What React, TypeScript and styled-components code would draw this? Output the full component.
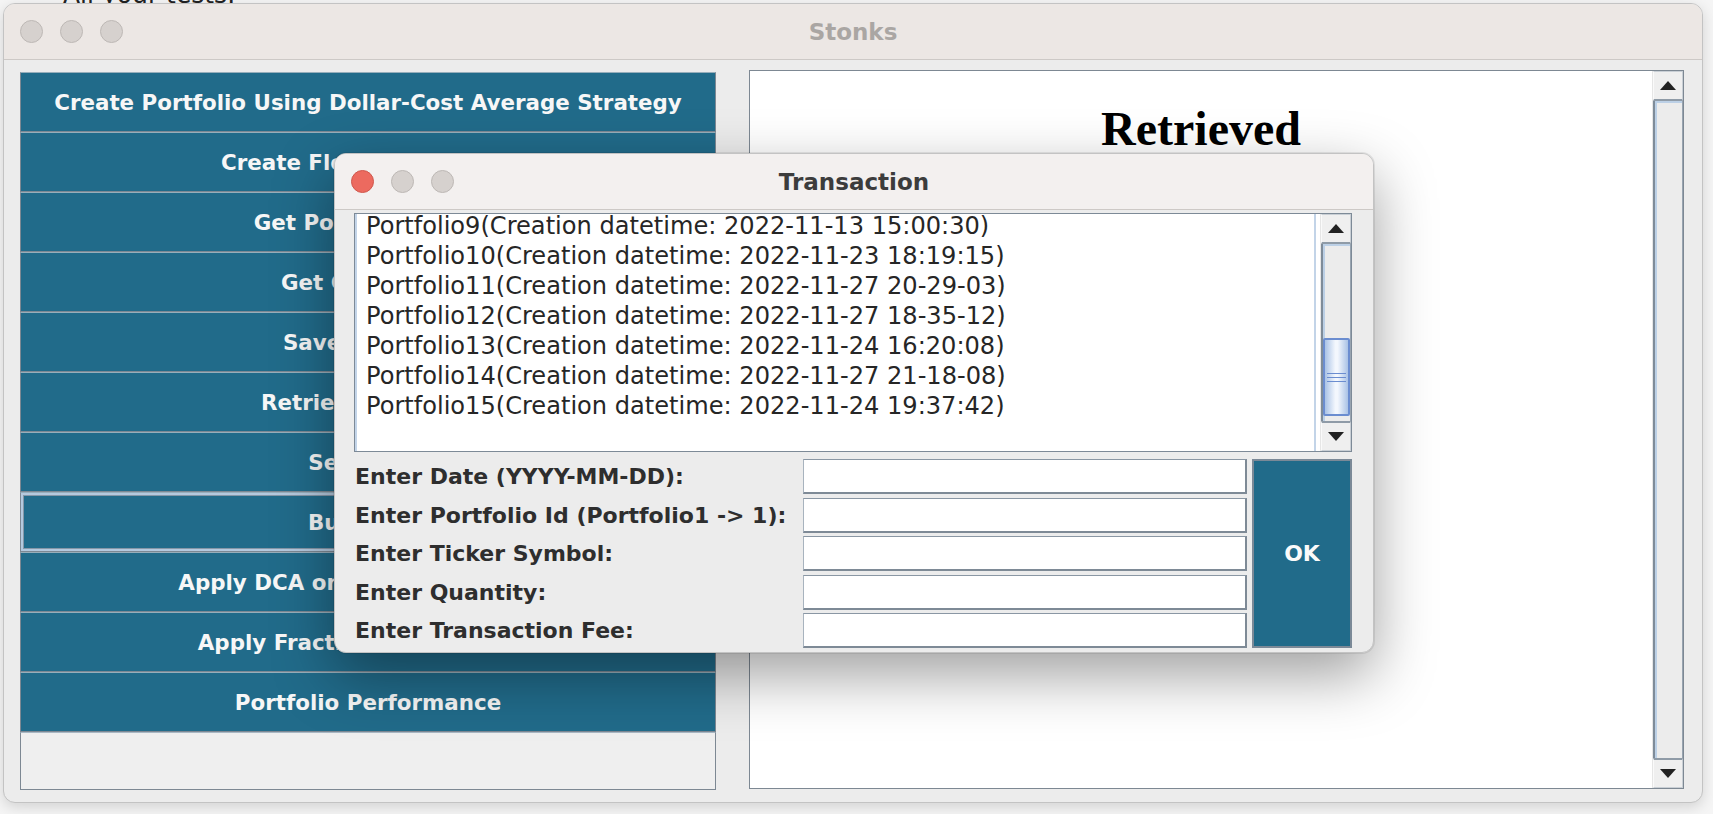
import React from "react";
import styled, { createGlobalStyle } from "styled-components";

const GlobalStyle = createGlobalStyle`
  html, body { margin: 0; padding: 0; }
  body {
    background: #f4f4f4;
    font-family: "DejaVu Sans", "Liberation Sans", sans-serif;
    overflow: hidden;
  }
`;

const Desktop = styled.div`
  position: relative;
  width: 1713px;
  height: 814px;
  overflow: hidden;
  background: #f5f5f5;
`;

const BehindText = styled.div`
  position: absolute;
  left: 63px;
  top: -18px;
  font: 25px/25px "DejaVu Sans", sans-serif;
  color: #222;
  white-space: nowrap;
`;

const Window = styled.div<{ $left: number; $top: number; $w: number; $h: number; $shadow: string }>`
  position: absolute;
  left: ${(p) => p.$left}px;
  top: ${(p) => p.$top}px;
  width: ${(p) => p.$w}px;
  height: ${(p) => p.$h}px;
  box-sizing: border-box;
  border: 1px solid #c3c3c3;
  border-radius: 12px;
  background: #ececec;
  box-shadow: ${(p) => p.$shadow};
  display: flex;
  flex-direction: column;
  overflow: hidden;
`;

const TitleBar = styled.div<{ $bg: string }>`
  height: 56px;
  flex: none;
  box-sizing: border-box;
  background: ${(p) => p.$bg};
  border-bottom: 1px solid #cdc9c6;
  display: grid;
  grid-template-columns: 1fr auto 1fr;
  align-items: center;
  padding: 0 16px;
`;

const Lights = styled.div`
  display: flex;
  gap: 17px;
`;

const Light = styled.span<{ $fill: string; $edge: string }>`
  width: 23px;
  height: 23px;
  box-sizing: border-box;
  border-radius: 50%;
  background: ${(p) => p.$fill};
  border: 1px solid ${(p) => p.$edge};
`;

const Title = styled.div<{ $color: string }>`
  font: bold 23px "DejaVu Sans", sans-serif;
  color: ${(p) => p.$color};
  white-space: nowrap;
`;

const MainBody = styled.div`
  flex: 1;
  display: flex;
  gap: 33px;
  padding: 12px 18px 12px 16px;
  min-height: 0;
`;

const LeftPanel = styled.div`
  width: 696px;
  flex: none;
  display: flex;
  flex-direction: column;
`;

const MenuButton = styled.div<{ $focused?: boolean }>`
  height: 60px;
  flex: none;
  box-sizing: border-box;
  display: flex;
  align-items: center;
  justify-content: center;
  background: #216b8a;
  border: 1px solid #7d8893;
  border-top-color: #97aebb;
  box-shadow: ${(p) =>
    p.$focused ? "inset 0 0 0 2px #b4c9de, inset 0 0 0 3px #8597a8" : "none"};
  color: #f7f7f7;
  font: bold 21.4px "DejaVu Sans", sans-serif;
  white-space: nowrap;
  overflow: hidden;
`;

const EmptyBox = styled.div`
  flex: 1;
  background: #efefef;
  border: 1px solid #7d8893;
  border-top-color: #a9b8c4;
`;

const RightPanel = styled.div`
  flex: 1;
  display: flex;
  background: #fff;
  border: 1px solid #7d8893;
  margin-top: -2px;
  margin-bottom: 1px;
`;

const Document = styled.div`
  flex: 1;
  padding-top: 30px;
`;

const Heading = styled.h1`
  margin: 0;
  text-align: center;
  font: bold 48px "Liberation Serif", "Times New Roman", serif;
  color: #000;
`;

const ScrollColumn = styled.div`
  width: 30px;
  flex: none;
  display: flex;
  flex-direction: column;
  background: #ececec;
  border-left: 1px solid #e6e6e6;
`;

const ScrollButton = styled.div<{ $up?: boolean }>`
  height: 30px;
  flex: none;
  box-sizing: border-box;
  display: flex;
  align-items: center;
  justify-content: center;
  background: #efefef;
  border: 1px solid #c9cfd5;
  border-left-color: #fafafa;
  ${(p) => (p.$up ? "border-bottom: 2px solid #8f9ba7;" : "border-top: 2px solid #8f9ba7;")}
`;

const Track = styled.div`
  flex: 1;
  position: relative;
  background: #ececec;
  border-left: 2px solid #7f8c99;
  border-right: 1px solid #98a4b0;
  box-shadow: inset 2px 0 0 #bcd0e6, inset 0 2px 0 #bcd0e6;
`;

const Thumb = styled.div`
  position: absolute;
  left: 0;
  right: 0;
  box-sizing: border-box;
  border: 2px solid #6b8dd0;
  border-radius: 2px;
  background: linear-gradient(to right, #a9c2e6, #f3f7fd 45%, #f3f7fd 55%, #a9c2e6);
  display: flex;
  align-items: center;
  justify-content: center;
`;

const Grip = styled.div`
  width: 19px;
  height: 9px;
  background: repeating-linear-gradient(
    to bottom,
    #6b8dd0 0px,
    #6b8dd0 1px,
    transparent 1px,
    transparent 4px
  );
`;

const Arrow = ({ up }: { up?: boolean }) => (
  <svg width="16" height="9" viewBox="0 0 16 9">
    <polygon points={up ? "8,0 16,9 0,9" : "0,0 16,0 8,9"} fill="#222" />
  </svg>
);

const Scrollbar = ({ thumb }: { thumb?: { top: number; height: number } }) => (
  <ScrollColumn>
    <ScrollButton $up>
      <Arrow up />
    </ScrollButton>
    <Track>
      {thumb && (
        <Thumb style={{ top: thumb.top, height: thumb.height }}>
          <Grip />
        </Thumb>
      )}
    </Track>
    <ScrollButton>
      <Arrow />
    </ScrollButton>
  </ScrollColumn>
);

const DialogBody = styled.div`
  flex: 1;
  display: flex;
  flex-direction: column;
  gap: 7px;
  padding: 3px 21px 4px 19px;
`;

const ListBox = styled.div`
  height: 239px;
  flex: none;
  box-sizing: border-box;
  display: flex;
  background: #fff;
  border: 1px solid #7d8a97;
`;

const ListContent = styled.div`
  flex: 1;
  overflow: hidden;
  border-left: 2px solid #c3d4e8;
  border-right: 2px solid #c3d4e8;
  margin-right: 4px;
  padding-left: 9px;
`;

const ListInner = styled.div`
  margin-top: -3px;
`;

const ListItem = styled.div`
  font: 24.1px/30px "DejaVu Sans", sans-serif;
  color: #262626;
  white-space: nowrap;
`;

const Form = styled.div`
  display: grid;
  grid-template-columns: 444px 444px 100px;
  grid-template-rows: repeat(5, 35px);
  column-gap: 5px;
  row-gap: 3.5px;
`;

const Label = styled.div<{ $row: number }>`
  grid-column: 1;
  grid-row: ${(p) => p.$row};
  align-self: center;
  padding-left: 1px;
  font: bold 22px "DejaVu Sans", sans-serif;
  color: #2e2e2e;
  white-space: nowrap;
`;

const Field = styled.div<{ $row: number }>`
  grid-column: 2;
  grid-row: ${(p) => p.$row};
  box-sizing: border-box;
  background: #fff;
  border-top: 1px solid #8a97a4;
  border-left: 1px solid #a8b3be;
  border-right: 2px solid #7e8a96;
  border-bottom: 2px solid #7e8a96;
`;

const OkButton = styled.div`
  grid-column: 3;
  grid-row: 1 / span 5;
  box-sizing: border-box;
  display: flex;
  align-items: center;
  justify-content: center;
  background: #216b8a;
  border: 2px solid #7b8997;
  color: #fafafa;
  font: bold 22px "DejaVu Sans", sans-serif;
`;

const menu = [
  "Create Portfolio Using Dollar-Cost Average Strategy",
  "Create Flexible Portfolio",
  "Get Portfolio Value",
  "Get Cost Basis",
  "Save Portfolio",
  "Retrieve Portfolio",
  "Sell Stock",
  "Buy Stock",
  "Apply DCA on Existing Portfolio",
  "Apply Fractional Investment",
  "Portfolio Performance",
];

const portfolios = [
  "Portfolio9(Creation datetime: 2022-11-13 15:00:30)",
  "Portfolio10(Creation datetime: 2022-11-23 18:19:15)",
  "Portfolio11(Creation datetime: 2022-11-27 20-29-03)",
  "Portfolio12(Creation datetime: 2022-11-27 18-35-12)",
  "Portfolio13(Creation datetime: 2022-11-24 16:20:08)",
  "Portfolio14(Creation datetime: 2022-11-27 21-18-08)",
  "Portfolio15(Creation datetime: 2022-11-24 19:37:42)",
];

const labels = [
  "Enter Date (YYYY-MM-DD):",
  "Enter Portfolio Id (Portfolio1 -> 1):",
  "Enter Ticker Symbol:",
  "Enter Quantity:",
  "Enter Transaction Fee:",
];

export default function App() {
  return (
    <>
      <GlobalStyle />
      <Desktop>
        <BehindText>All your tests.</BehindText>
        <Window $left={3} $top={3} $w={1700} $h={800} $shadow="0 4px 14px rgba(0,0,0,0.14)">
          <TitleBar $bg="#ece7e4">
            <Lights>
              <Light $fill="#d6d1ce" $edge="#bdb8b5" />
              <Light $fill="#d6d1ce" $edge="#bdb8b5" />
              <Light $fill="#d6d1ce" $edge="#bdb8b5" />
            </Lights>
            <Title $color="#aaa6a3">Stonks</Title>
            <span />
          </TitleBar>
          <MainBody>
            <LeftPanel>
              {menu.map((m) => (
                <MenuButton key={m} $focused={m === "Buy Stock"}>
                  {m}
                </MenuButton>
              ))}
              <EmptyBox />
            </LeftPanel>
            <RightPanel>
              <Document>
                <Heading>Retrieved</Heading>
              </Document>
              <Scrollbar />
            </RightPanel>
          </MainBody>
        </Window>

        <Window
          $left={334}
          $top={153}
          $w={1040}
          $h={500}
          $shadow="0 22px 60px rgba(0,0,0,0.38), 0 0 0 1px rgba(0,0,0,0.08)"
        >
          <TitleBar $bg="#f3f0ef">
            <Lights>
              <Light $fill="#ec6a5f" $edge="#d0574c" />
              <Light $fill="#d6d1ce" $edge="#bdb8b5" />
              <Light $fill="#d6d1ce" $edge="#bdb8b5" />
            </Lights>
            <Title $color="#3c3c3c">Transaction</Title>
            <span />
          </TitleBar>
          <DialogBody>
            <ListBox>
              <ListContent>
                <ListInner>
                  {portfolios.map((p) => (
                    <ListItem key={p}>{p}</ListItem>
                  ))}
                </ListInner>
              </ListContent>
              <Scrollbar thumb={{ top: 94, height: 78 }} />
            </ListBox>
            <Form>
              {labels.map((l, i) => (
                <React.Fragment key={l}>
                  <Label $row={i + 1}>{l}</Label>
                  <Field $row={i + 1} />
                </React.Fragment>
              ))}
              <OkButton>OK</OkButton>
            </Form>
          </DialogBody>
        </Window>
      </Desktop>
    </>
  );
}
